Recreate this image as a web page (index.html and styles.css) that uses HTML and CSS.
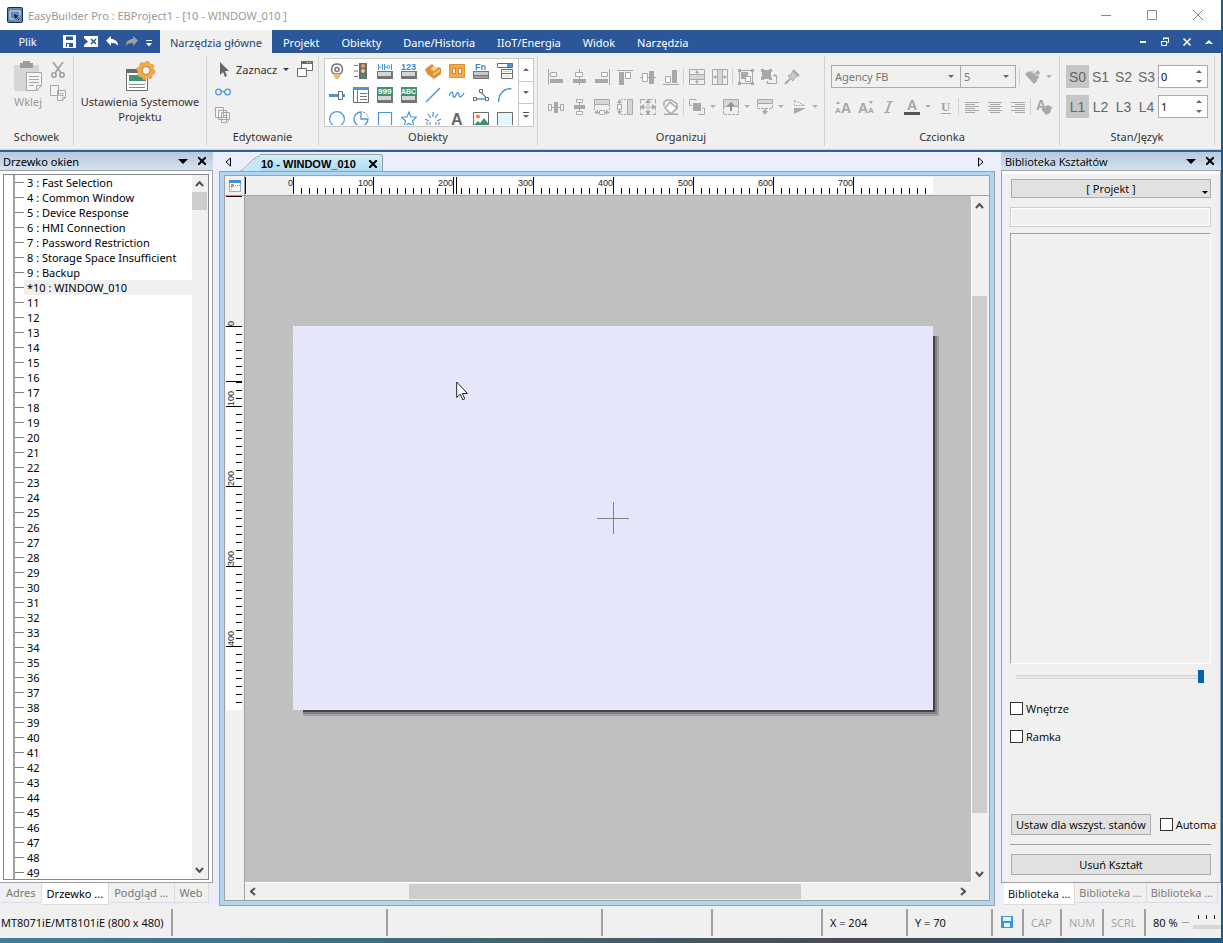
FILE: index.html
```html
<!DOCTYPE html>
<html lang="pl">
<head>
    <meta charset="UTF-8">
    <meta name="viewport" content="width=device-width, initial-scale=1.0">
    <title>EasyBuilder Pro : EBProject1</title>
    <link rel="stylesheet" href="styles.css">
</head>
<body>
<div class="window">

    <header class="titlebar">
        <svg class="app-icon" width="16" height="16" viewBox="0 0 16 16"><rect width="16" height="16" rx="2" fill="#1d2c44"/><rect x="1" y="1" width="14" height="14" rx="1" fill="#5d86b4"/><path d="M3 12V4h10v4M3 12h4" fill="none" stroke="#dce8f4" stroke-width="1"/><path d="M6 6l7 3-3 1 3 3-1 1-3-3-1 3z" fill="#16243a" stroke="#c4d6ea" stroke-width=".5"/></svg>
        <span class="app-title">EasyBuilder Pro : EBProject1 - [10 - WINDOW_010 ]</span>
        <button class="win-btn" aria-label="Minimalizuj"><svg width="10" height="10"><path d="M0 5.5h10"/></svg></button>
        <button class="win-btn" aria-label="Maksymalizuj"><svg width="10" height="10"><path d="M.5 .5h9v9h-9z"/></svg></button>
        <button class="win-btn" aria-label="Zamknij"><svg width="10" height="10"><path d="M0 0l10 10M10 0L0 10"/></svg></button>
    </header>

    <nav class="tabs">
        <button class="file-tab">Plik</button>
        <div class="quick">
            <button aria-label="Zapisz"><svg width="13" height="13" viewBox="0 0 13 13"><path d="M0 0h13v13H0z" fill="#fff"/><path d="M3 1.500h7v3.500H3zM3 8h7v4H3z" fill="#2b579a"/><path d="M4 9h2v3H4z" fill="#fff"/></svg></button>
            <button aria-label="Kompiluj"><svg width="14" height="13" viewBox="0 0 14 13"><path d="M0 1h14v11H0z" fill="#fff"/><path d="M0 3l4 3.500L0 10z" fill="#2b579a"/><path d="M7 4l5 5M12 4L7 9" stroke="#2b579a" stroke-width="1.500"/></svg></button>
            <button aria-label="Cofnij"><svg width="12" height="11" viewBox="0 0 12 11"><path d="M0 4.500L5 0v3c4 0 7 2 7 7-2-3-4-3-7-3v3z" fill="#fff"/></svg></button>
            <button aria-label="Ponów"><svg width="12" height="11" viewBox="0 0 12 11"><path d="M12 4.500L7 0v3C3 3 0 5 0 10c2-3 4-3 7-3v3z" fill="#a0a0a0"/></svg></button>
            <button class="more" aria-label="Więcej"><svg width="6" height="7" viewBox="0 0 6 7"><path d="M0 0h6v1H0zM0 3h6L3 6.500z" fill="#fff"/></svg></button>
        </div>
        <button class="tab active">Narzędzia główne</button>
        <button class="tab">Projekt</button>
        <button class="tab">Obiekty</button>
        <button class="tab">Dane/Historia</button>
        <button class="tab">IIoT/Energia</button>
        <button class="tab">Widok</button>
        <button class="tab">Narzędzia</button>
        <div class="mdi">
            <button aria-label="Minimalizuj okno"><svg width="10" height="10"><path d="M2 5h6" stroke="#fff" stroke-width="2"/></svg></button>
            <button aria-label="Przywróć okno"><svg width="10" height="10"><path d="M3.500 3V1.500h5v4H7M1.500 4.500h5v4h-5zM1 4.500h6M3 1h6" fill="none" stroke="#fff"/></svg></button>
            <button aria-label="Zamknij okno"><svg width="10" height="10"><path d="M1.500 1.500l7 7M8.500 1.500l-7 7" stroke="#fff" stroke-width="1.600"/></svg></button>
            <button aria-label="Zwiń wstążkę"><svg width="10" height="10"><path d="M1 7l4-4 4 4H6.500L5 6 3.500 7z" fill="#fff"/></svg></button>
        </div>
    </nav>

    <section class="ribbon">
        <div class="group g-clipboard">
            <div class="group-body">
                <button class="big muted">
                    <svg width="30" height="31" viewBox="0 0 30 31"><path d="M1 4h25v26H1z" fill="#d6d6d6"/><path d="M7 2h3V0h7v2h3v5H7z" fill="#9c9c9c"/><path d="M13.500 11.500h15v13l-5 5h-10z" fill="#f4f4f4" stroke="#a6a6a6"/><path d="M28 24.500h-4.500V29M16 15.500h10M16 18.500h10M16 21.500h10M16 24.500h5" fill="none" stroke="#a6a6a6"/></svg>
                    Wklej
                </button>
                <div class="stack">
                    <button aria-label="Wytnij"><svg width="14" height="16" viewBox="0 0 14 16" fill="none" stroke="#9f9f9f" stroke-width="1.600"><path d="M2 0l8 11M12 0L4 11"/><circle cx="3" cy="13" r="2.200"/><circle cx="11" cy="13" r="2.200"/></svg></button>
                    <button aria-label="Kopiuj"><svg width="16" height="16" viewBox="0 0 16 16" fill="#f4f4f4" stroke="#a6a6a6"><path d="M.5 .5h8v10h-8zM7.500 5.500h8v7l-3 3h-5z"/><path d="M9.500 8.500h4M9.500 10.500h4M15 12.500h-2.500V15"/></svg></button>
                </div>
            </div>
            <div class="group-name">Schowek</div>
        </div>

        <div class="group g-system">
            <div class="group-body">
                <button class="big">
                    <svg width="32" height="31" viewBox="0 0 32 31"><path d="M2 8h16v4H2z" fill="#6b6b6b"/><path d="M2.500 11.500h21v18h-21z" fill="#fff" stroke="#6b6b6b"/><path d="M5 14h17v6H5z" fill="#41936f"/><path d="M5 23.500h16M5 26.500h16" stroke="#8a8a8a"/><circle cx="22" cy="9.500" r="6" fill="none" stroke="#f5ab4a" stroke-width="5"/><circle cx="22" cy="9.500" r="8.500" fill="none" stroke="#eda244" stroke-width="2" stroke-dasharray="3.300 3.300"/><circle cx="22" cy="9.500" r="4" fill="#f4f4f4" stroke="#b98034"/></svg>
                    Ustawienia Systemowe<br>Projektu
                </button>
            </div>
            <div class="group-name"></div>
        </div>

        <div class="group g-edit">
            <div class="group-body edit-body">
                <div class="edit-row">
                    <button class="select-btn"><svg width="11" height="15" viewBox="0 0 11 15"><path d="M1 0l9 9H6l2 5-2 1-2-5-3 3z" fill="#666"/></svg>Zaznacz<i class="caret dark"></i></button>
                    <button aria-label="Okna"><svg width="16" height="16" viewBox="0 0 16 16" fill="#fff" stroke="#6b6b6b"><path d="M4.500 .5h11v9h-11z"/><path d="M4 1.500h12" stroke-width="3"/><path d="M10 1.500h1M12.500 1.500h1" stroke="#fff"/><path d="M.5 7.500h9v8h-9z"/></svg></button>
                </div>
                <button aria-label="Znajdź"><svg width="16" height="8" viewBox="0 0 16 8" fill="none" stroke="#4a96dd" stroke-width="1.300"><circle cx="3.500" cy="4" r="2.800"/><circle cx="12.500" cy="4" r="2.800"/><path d="M6.500 3.500h3"/></svg></button>
                <button aria-label="Powiel"><svg width="16" height="16" viewBox="0 0 16 16" fill="#f4f4f4" stroke="#a6a6a6"><path d="M.5 .5h8v10h-8zM3.500 3.500h8v9h-8zM6.500 5.500h8v7l-3 3h-5z"/><path d="M8.500 8.500h4M8.500 10.500h4M14 12.500h-2.500V15"/></svg></button>
            </div>
            <div class="group-name">Edytowanie</div>
        </div>

        <div class="group g-objects">
            <div class="gallery">
                <div class="gallery-items">
                    <button aria-label="Lampka"><svg width="16" height="16" viewBox="0 0 16 16"><path d="M5 11C1 8 2 1 8 1s7 7 3 10z" fill="none" stroke="#777" stroke-width="1.500"/><circle cx="8" cy="6.500" r="2" fill="none" stroke="#777" stroke-width="1.500"/><path d="M5 11h6v3l-2 2H7l-2-2z" fill="#eebb72"/></svg></button>
                    <button aria-label="Lampka stanu"><svg width="16" height="16" viewBox="0 0 16 16"><path d="M1 2.500h4M1 8h4M1 13.500h4" stroke="#777"/><path d="M6 0h8v16H6z" fill="#6b6b6b"/><circle cx="10" cy="3" r="2" fill="#f2a33c"/><circle cx="10" cy="8" r="2" fill="#f2c98c"/><path d="M8 11h4v4H8z" fill="#41936f"/></svg></button>
                    <button aria-label="Przełącznik bitowy"><svg width="16" height="16" viewBox="0 0 16 16"><path d="M1.500 1v6M1.500 4h3M5.500 1v6M7.500 1v6M7 4h3M14.500 1v6" stroke="#4a96dd"/><circle cx="11.500" cy="4" r="1.500" fill="none" stroke="#4a96dd"/><path d="M0 8h16v8H0z" fill="#757575"/><path d="M1 9h13v4H1z" fill="#d6d6d6"/></svg></button>
                    <button aria-label="Przełącznik słowny"><svg width="16" height="16" viewBox="0 0 16 16"><text x="0" y="7" class="glyph blue">123</text><path d="M0 8h16v8H0z" fill="#757575"/><path d="M1 9h13v4H1z" fill="#d6d6d6"/></svg></button>
                    <button aria-label="Klawisz funkcyjny"><svg width="16" height="16" viewBox="0 0 16 16"><path d="M0 6l7-5 2 2-3 3 3 2 4-4 3 1v6l-7 5-7-5z" fill="#dd9235"/><path d="M6 6l3-3 4 2-4 3zM8 11l7-5v2l-7 5z" fill="#f8cd91"/></svg></button>
                    <button aria-label="Przełącznik"><svg width="16" height="16" viewBox="0 0 16 16"><path d="M.5 1.500h15v13H.5z" fill="#f5ab4a" stroke="#dd9235"/><path d="M3.500 5.500h3v5h-3zM9.500 5.500h3v5h-3z" fill="#fff" stroke="#c6812e"/></svg></button>
                    <button aria-label="Funkcja"><svg width="16" height="16" viewBox="0 0 16 16"><text x="2" y="7" class="glyph blue">Fn</text><path d="M0 8h16v8H0z" fill="#757575"/><path d="M1 9h14v3H1z" fill="#c9c9c9"/><path d="M1 13h14v2H1z" fill="#a0a0a0"/></svg></button>
                    <button aria-label="Lista opcji"><svg width="16" height="16" viewBox="0 0 16 16" fill="#fff" stroke="#6b6b6b"><path d="M.5 .5h15v4H.5zM4.500 6.500h11v4h-11zM4.500 10.500h11v5h-11z"/><path d="M10 1h5v3h-5z" fill="#4a96dd" stroke="none"/><path d="M6 8.500h8M6 13h8" stroke="#d0d0d0"/></svg></button>

                    <button aria-label="Suwak"><svg width="16" height="16" viewBox="0 0 16 16"><path d="M0 8.500h16" stroke="#4a96dd" stroke-width="3"/><path d="M9.500 4.500h4v8h-4z" fill="#fff" stroke="#6b6b6b"/></svg></button>
                    <button aria-label="Lista"><svg width="16" height="16" viewBox="0 0 16 16"><path d="M.5 .5h15v15H.5z" fill="#fff" stroke="#6b6b6b"/><path d="M0 0h16v3H0z" fill="#4a96dd"/><path d="M4.500 3v12M7 6.500h7M7 9.500h7M7 12.500h7" stroke="#777"/></svg></button>
                    <button aria-label="Numeryczny"><svg width="16" height="16" viewBox="0 0 16 16"><path d="M0 0h16v8H0z" fill="#41936f"/><text x="1" y="7" class="glyph white">999</text><path d="M0 8h16v8H0z" fill="#757575"/><path d="M1 9h13v4H1z" fill="#d6d6d6"/></svg></button>
                    <button aria-label="ASCII"><svg width="16" height="16" viewBox="0 0 16 16"><path d="M0 0h16v8H0z" fill="#41936f"/><text x="0" y="7" class="glyph white small">ABC</text><path d="M0 8h16v8H0z" fill="#757575"/><path d="M1 9h13v4H1z" fill="#d6d6d6"/></svg></button>
                    <button aria-label="Linia"><svg width="16" height="16" viewBox="0 0 16 16"><path d="M1 15L15 1" stroke="#4a96dd" stroke-width="1.400"/></svg></button>
                    <button aria-label="Krzywa"><svg width="16" height="16" viewBox="0 0 16 16"><path d="M0 9c2-6 4-4 4-1s2 3 3 0 3-3 3 0 3 2 5-2" fill="none" stroke="#4a96dd" stroke-width="1.400"/></svg></button>
                    <button aria-label="Łamana"><svg width="16" height="16" viewBox="0 0 16 16"><path d="M3 12h10M8 5l6 7" stroke="#4a96dd" stroke-width="1.400"/><path d="M.5 10.500h3v3h-3zM6.500 2.500h3v3h-3zM12.500 10.500h3v3h-3z" fill="#fff" stroke="#6b6b6b"/></svg></button>
                    <button aria-label="Łuk"><svg width="16" height="16" viewBox="0 0 16 16"><path d="M1.500 15C1.500 7 7 1.500 14.500 1.500" fill="none" stroke="#4a96dd" stroke-width="1.400"/></svg></button>

                    <button aria-label="Okrąg"><svg width="16" height="16" viewBox="0 0 16 16"><circle cx="8" cy="8" r="7.400" fill="none" stroke="#4a96dd" stroke-width="1.200"/></svg></button>
                    <button aria-label="Wycinek"><svg width="16" height="16" viewBox="0 0 16 16" fill="none"><path d="M8 1a7 7 0 1 0 7 7H8z" stroke="#4a96dd" stroke-width="1.300"/><path d="M10 1a7 7 0 0 1 5 5" stroke="#777" stroke-dasharray="2 1"/></svg></button>
                    <button aria-label="Prostokąt"><svg width="16" height="16" viewBox="0 0 16 16"><path d="M1.500 1.500h13v15h-13z" fill="none" stroke="#4a96dd" stroke-width="1.200"/></svg></button>
                    <button aria-label="Wielokąt"><svg width="16" height="16" viewBox="0 0 16 16"><path d="M8 1l2 5h5.500l-4 4 1.500 5.500-5-3-5 3L4.500 10l-4-4H6z" fill="none" stroke="#4a96dd" stroke-width="1.200"/></svg></button>
                    <button aria-label="Skala"><svg width="16" height="16" viewBox="0 0 16 16"><path d="M8 1v5M3 3l3 4M13 3l-3 4M0 8l4 2M16 8l-4 2" stroke="#4a96dd" stroke-width="1.200"/><path d="M2 11v3M5 11v3M11 11v3M14 11v3" stroke="#777"/></svg></button>
                    <button aria-label="Tekst"><svg width="16" height="16" viewBox="0 0 16 16"><text x="2" y="14" class="glyph letter">A</text></svg></button>
                    <button aria-label="Obraz"><svg width="16" height="16" viewBox="0 0 16 16"><path d="M.5 1.500h15v13H.5z" fill="#fff" stroke="#6b6b6b"/><circle cx="5" cy="5.500" r="2" fill="#e0902f"/><path d="M1 14l4-4 2 2 4-5 4 5v2z" fill="#41936f"/></svg></button>
                    <button aria-label="Ramka"><svg width="16" height="16" viewBox="0 0 16 16"><path d="M.5 1.500h15v14H.5z" fill="#e4f6fd" stroke="#6b6b6b"/></svg></button>
                </div>
                <div class="gallery-scroll">
                    <button aria-label="W górę"><i class="caret up"></i></button>
                    <button aria-label="W dół"><i class="caret"></i></button>
                    <button aria-label="Rozwiń" class="expand"><i class="caret"></i></button>
                </div>
            </div>
            <div class="group-name">Obiekty</div>
        </div>

        <div class="group g-arrange">
            <div class="tool-rows">
                <div class="tool-row">
                    <button aria-label="Do lewej"><svg class="off" width="16" height="16"><path d="M.5 0v16"/><path d="M2.500 3.500h6v4h-6z" class="w"/><path d="M2 10h13v4H2z" class="f"/></svg></button>
                    <button aria-label="Do środka"><svg class="off" width="16" height="16"><path d="M8.500 0v16"/><path d="M4.500 3.500h7v4h-7z" class="w"/><path d="M2 10h13v4H2z" class="f"/></svg></button>
                    <button aria-label="Do prawej"><svg class="off" width="16" height="16"><path d="M15.500 0v16"/><path d="M7.500 3.500h6v4h-6z" class="w"/><path d="M1 10h13v4H1z" class="f"/></svg></button>
                    <button aria-label="Do góry"><svg class="off" width="16" height="16"><path d="M0 1.500h16"/><path d="M8.500 3.500h5v6h-5z" class="w"/><path d="M2 3h5v13H2z" class="f"/></svg></button>
                    <button aria-label="W pionie"><svg class="off" width="16" height="16"><path d="M0 8.500h16"/><path d="M2.500 4.500h5v8h-5z" class="w"/><path d="M9 2h5v13H9z" class="f"/></svg></button>
                    <button aria-label="Do dołu"><svg class="off" width="16" height="16"><path d="M0 15.500h16"/><path d="M2.500 7.500h5v6h-5z" class="w"/><path d="M9 1h5v13H9z" class="f"/></svg></button>
                    <i class="bar"></i>
                    <button aria-label="Środek pion"><svg class="off" width="16" height="16"><path d="M.5 .5h15v15H.5zM0 5.500h16M0 10.500h16M8 2v3M8 11v3"/><path d="M6 4l2-3 2 3zM6 12l2 3 2-3z" class="f"/><path d="M1 6h14v4H1z" class="l"/></svg></button>
                    <button aria-label="Środek poziom"><svg class="off" width="16" height="16"><path d="M.5 .5h15v15H.5zM5.500 0v16M10.500 0v16M2 8h3M11 8h3"/><path d="M4 6L1 8l3 2zM12 6l3 2-3 2z" class="f"/><path d="M6 1h4v14H6z" class="l"/></svg></button>
                    <i class="bar"></i>
                    <button aria-label="Grupuj"><svg class="off" width="16" height="16"><path d="M1.500 1.500h13v13h-13z"/><path d="M3 3h7v7H3zM0 0h3v3H0zM13 0h3v3h-3zM0 13h3v3H0zM13 13h3v3h-3z" class="f"/><path d="M7.500 7.500h5v5h-5z" class="w"/></svg></button>
                    <button aria-label="Rozgrupuj"><svg class="off" width="16" height="16"><path d="M1 1h9v9H1zM0 0h3v3H0zM8 0h3v3H8zM0 8h3v3H0zM8 8h3v3H8z" class="f"/><path d="M12 6.500h3.500v8h-9V12M5 14h3M14 5v3"/></svg></button>
                    <button aria-label="Przypnij"><svg class="off" width="16" height="16"><path d="M9 2l5 5-2 1-2 2-1 2-5-5 2-1 2-2z" fill="#c8c8c8"/><path d="M9 1l6 6M6 10l-5 5" stroke-width="2"/></svg></button>
                </div>
                <div class="tool-row">
                    <button aria-label="Odstęp poziomy"><svg class="off" width="16" height="16"><path d="M0 8.500h16"/><path d="M.5 5.500h3v6h-3zM12.500 5.500h3v6h-3z" class="w"/><path d="M6 3h4v11H6z" class="f"/></svg></button>
                    <button aria-label="Odstęp pionowy"><svg class="off" width="16" height="16"><path d="M8.500 0v16"/><path d="M5.500 .5h6v3h-6zM5.500 12.500h6v3h-6z" class="w"/><path d="M3 6h11v4H3z" class="f"/></svg></button>
                    <button aria-label="Ta sama szerokość"><svg class="off" width="16" height="16"><path d="M.5 .5h15v5H.5z" fill="#d6d6d6"/><path d="M.5 6v6M15.500 6v6" stroke-dasharray="2 1"/><path d="M1 13.500h14"/><path d="M5.500 11.500h5v4h-5z" class="w"/><path d="M0 13.500l4-3v5zM16 13.500l-4-3v5z" class="f"/></svg></button>
                    <button aria-label="Ta sama wysokość"><svg class="off" width="16" height="16"><path d="M10.500 .5h5v15h-5z" fill="#d6d6d6"/><path d="M4 .5h6M4 15.500h6" stroke-dasharray="2 1"/><path d="M2.500 1v14"/><path d="M.5 5.500h4v5h-4z" class="w"/><path d="M2.500 0L0 4h5zM2.500 16L0 12h5z" class="f"/></svg></button>
                    <button aria-label="Ten sam rozmiar"><svg class="off" width="16" height="16"><path d="M.5 .5h15v15H.5z" stroke-dasharray="5 2"/><path d="M8 1v14M1 8h14"/><path d="M8 0L5 4h6zM8 16l-3-4h6zM0 8l4-3v6zM16 8l-4-3v6z" class="f"/><path d="M6 6h4v4H6z" class="l"/></svg></button>
                    <button aria-label="Wypełnienie"><svg class="off" width="16" height="16"><path d="M7 3l7 6-6 6-6-6zM1 7V3l3-2h4l6 4v5" stroke-width="1.500" class="w"/><path d="M1 15.500h14" stroke-width="2"/></svg></button>
                    <i class="bar"></i>
                    <button class="wide" aria-label="Kolejność"><svg class="off" width="16" height="16"><path d="M7 1.500V.5H.5v6H3M10 14.500v1h5.500V9H13"/><path d="M4 4h8v8H4z" class="f"/></svg><i class="caret pale"></i></button>
                    <button class="wide" aria-label="Warstwa w górę"><svg class="off" width="16" height="16"><path d="M.5 .5h15v7H.5z" fill="#d6d6d6"/><path d="M.5 8v7.500h15V8" stroke-dasharray="3 1"/><path d="M8 4v8" stroke-width="2" stroke="#909090"/><path d="M4 7l4-4 4 4z" fill="#909090" stroke="none"/></svg><i class="caret pale"></i></button>
                    <button class="wide" aria-label="Warstwa w dół"><svg class="off" width="16" height="16"><path d="M.5 .5h15v4H.5z" fill="#d6d6d6"/><path d="M.5 5v4.500h15V5" stroke-dasharray="3 1"/><path d="M8 10v3" stroke-width="2"/><path d="M5 12h6l-3 4z" class="f"/></svg><i class="caret pale"></i></button>
                    <button class="wide" aria-label="Obróć"><svg class="off" width="16" height="16"><path d="M3.500 1.500l10 5h-10z" stroke-dasharray="2 1" class="w"/><path d="M3 9h12L3 15z" class="f"/></svg><i class="caret pale"></i></button>
                </div>
            </div>
            <div class="group-name">Organizuj</div>
        </div>

        <div class="group g-font">
            <div class="tool-rows">
                <div class="tool-row">
                    <span class="combo font-name"><select aria-label="Czcionka"><option>Agency FB</option></select><i class="caret"></i></span>
                    <span class="combo font-size"><select aria-label="Rozmiar"><option>5</option></select><i class="caret"></i></span>
                    <i class="bar"></i>
                    <button class="wide" aria-label="Malarz"><svg class="off" width="16" height="16" viewBox="0 0 16 16"><path d="M0 5l4-3 9 6-1 4-3 3z" class="f"/><path d="M4 3l3-2 8 5-2 3z" class="l"/><path d="M10 4l3-3 2 3-2 2z" class="f"/><path d="M5 3l9 6" stroke-width="1.500"/></svg><i class="caret pale"></i></button>
                </div>
                <div class="tool-row">
                    <button aria-label="Powiększ"><svg class="off" width="16" height="16"><text x="6" y="14" class="glyph letter off-letter">A</text><text x="0" y="14" class="glyph tiny">A</text><path d="M1 5l2-3 2 3z" class="f"/></svg></button>
                    <button aria-label="Zmniejsz"><svg class="off" width="16" height="16"><text x="0" y="14" class="glyph letter off-letter">A</text><text x="10" y="14" class="glyph tiny">A</text><path d="M11 2l2 3 2-3z" class="f"/></svg></button>
                    <button aria-label="Kursywa"><svg class="off" width="16" height="16"><path d="M6 2.500h6M3 13.500h6" /><path d="M9.500 2.500l-4 11" stroke-width="2"/></svg></button>
                    <button class="wide" aria-label="Kolor czcionki"><svg class="off" width="16" height="16"><text x="3" y="11" class="glyph letter off-letter">A</text><path d="M0 13h16v3H0z" fill="#555" stroke="none"/></svg><i class="caret pale"></i></button>
                    <button aria-label="Podkreślenie"><svg class="off" width="16" height="16"><text x="3" y="12" class="glyph under">U</text><path d="M3 14.500h10"/></svg></button>
                    <i class="bar"></i>
                    <button aria-label="Wyrównaj do lewej"><svg class="off" width="16" height="16"><path d="M1 3.500h14M1 5.500h10M1 7.500h14M1 9.500h10M1 11.500h14M1 13.500h10"/></svg></button>
                    <button aria-label="Wyśrodkuj"><svg class="off" width="16" height="16"><path d="M1 3.500h14M3 5.500h10M1 7.500h14M3 9.500h10M1 11.500h14M3 13.500h10"/></svg></button>
                    <button aria-label="Wyrównaj do prawej"><svg class="off" width="16" height="16"><path d="M1 3.500h14M5 5.500h10M1 7.500h14M5 9.500h10M1 11.500h14M5 13.500h10"/></svg></button>
                    <i class="bar"></i>
                    <button aria-label="Format tekstu"><svg class="off" width="16" height="16"><text x="0" y="11" class="glyph letter off-letter">A</text><path d="M5 10l7-4 4 2-2 6-4 2z" class="f"/></svg></button>
                </div>
            </div>
            <div class="group-name">Czcionka</div>
        </div>

        <div class="group g-state">
            <div class="tool-rows">
                <div class="tool-row">
                    <button class="state on">S0</button><button class="state">S1</button><button class="state">S2</button><button class="state">S3</button>
                    <span class="spin"><input type="text" value="0" aria-label="Stan"><span><i class="caret up"></i><i class="caret"></i></span></span>
                </div>
                <div class="tool-row">
                    <button class="state on">L1</button><button class="state">L2</button><button class="state">L3</button><button class="state">L4</button>
                    <span class="spin"><input type="text" value="1" aria-label="Język"><span><i class="caret up"></i><i class="caret"></i></span></span>
                </div>
            </div>
            <div class="group-name">Stan/Język</div>
        </div>
    </section>

    <main class="workspace">
        <aside class="dock left">
            <div class="dock-head"><span>Drzewko okien</span><button aria-label="Menu"><i class="caret big-caret"></i></button><button aria-label="Zamknij"><svg width="8" height="8"><path d="M0 0l8 8M8 0L0 8"/></svg></button></div>
            <div class="dock-body">
                <div class="tree-box">
                    <ul class="tree" id="tree"></ul>
                    <div class="vscroll">
                        <svg width="9" height="6"><path d="M1 5l3.500-4L8 5"/></svg>
                        <div class="thumb tree-thumb"></div>
                        <svg class="end" width="9" height="6"><path d="M1 1l3.500 4L8 1"/></svg>
                    </div>
                </div>
            </div>
            <div class="dock-tabs">
                <button>Adres</button><button class="active">Drzewko ...</button><button>Podgląd ...</button><button>Web</button>
            </div>
        </aside>

        <section class="editor">
            <div class="doc-tabs">
                <button class="nav" aria-label="Poprzednia"><svg width="6" height="10"><path d="M5.500 1v8L1 5z"/></svg></button>
                <div class="doc-tab">
                    <svg width="27" height="18"><path d="M0 18C10 17 14 1 27 .5V18z" fill="#c4e8f6"/><path d="M0 17.500C8 16 12 1 27 .5" fill="none" stroke="#a0a0a0"/></svg>
                    <div class="doc-label"><span>10 - WINDOW_010</span><button aria-label="Zamknij kartę"><svg width="8" height="8"><path d="M0 0l8 8M8 0L0 8"/></svg></button></div>
                </div>
                <button class="nav next" aria-label="Następna"><svg width="6" height="10"><path d="M.5 1v8L5 5z"/></svg></button>
            </div>
            <div class="frame">
                <div class="sheet">
                    <div class="corner"><svg width="12" height="12"><path d="M.5 .5h11v11H.5z" fill="#fff" stroke="#a0a8b0"/><path d="M0 0h12v3H0z" fill="#3f8ed8"/><path d="M2 4h3v3H2z" fill="#f08a24"/><path d="M2.500 7v4M6 5.500h5" stroke="#99a" stroke-dasharray="1 1"/></svg></div>
                    <div class="ruler-x"><div class="before"><span>0</span></div><div class="scale" id="scaleX"></div></div>
                    <div class="ruler-y"><div class="before"><span>0</span></div><div class="scale" id="scaleY"></div></div>
                    <div class="canvas">
                        <div class="page">
                            <svg class="cross" width="32" height="32"><path d="M0 16.500h32M16.500 0v32" stroke="#808080"/></svg>
                            <svg class="pointer" width="12" height="20" viewBox="0 0 12 20"><path d="M.7 1v15.500l3.600-3.300 2.500 5.600 2-1-2.400-5.300h5z" fill="#fff" stroke="#222"/></svg>
                        </div>
                    </div>
                    <div class="vscroll">
                        <svg width="9" height="6"><path d="M1 5l3.500-4L8 5"/></svg>
                        <div class="thumb canvas-thumb"></div>
                        <svg class="end" width="9" height="6"><path d="M1 1l3.500 4L8 1"/></svg>
                    </div>
                    <div class="hscroll">
                        <svg width="6" height="9"><path d="M5 1L1 4.500 5 8"/></svg>
                        <div class="thumb"></div>
                        <svg class="end" width="6" height="9"><path d="M1 1l4 3.500L1 8"/></svg>
                    </div>
                </div>
            </div>
        </section>

        <aside class="dock right">
            <div class="dock-head"><span>Biblioteka Kształtów</span><button aria-label="Menu"><i class="caret big-caret"></i></button><button aria-label="Zamknij"><svg width="8" height="8"><path d="M0 0l8 8M8 0L0 8"/></svg></button></div>
            <div class="dock-body">
                <div class="shapes">
                    <button class="btn project">[ Projekt ]<i class="caret"></i></button>
                    <input class="search" type="text" aria-label="Szukaj">
                    <div class="preview"></div>
                    <input class="slider" type="range" min="0" max="100" value="100" aria-label="Powiększenie">
                    <label class="check"><input type="checkbox">Wnętrze</label>
                    <label class="check"><input type="checkbox">Ramka</label>
                    <div class="apply">
                        <button class="btn">Ustaw dla wszyst. stanów</button>
                        <label class="check"><input type="checkbox">Automatycznie</label>
                    </div>
                    <hr>
                    <button class="btn">Usuń Kształt</button>
                </div>
            </div>
            <div class="dock-tabs">
                <button class="active">Biblioteka ...</button><button>Biblioteka ...</button><button>Biblioteka ...</button>
            </div>
        </aside>
    </main>

    <footer class="status">
        <span class="device">MT8071iE/MT8101iE (800 x 480)</span>
        <span class="cell w215"></span>
        <span class="cell w215"></span>
        <span class="cell w110"></span>
        <span class="cell w110"></span>
        <span class="cell w85">X = 204</span>
        <span class="cell w85">Y = 70</span>
        <span class="cell w31"><svg width="12" height="12" viewBox="0 0 12 12"><path d="M0 0h12v12H0z" fill="#3d95e0"/><path d="M2 1h8v4H2zM3 7h6v4H3z" fill="#e4f2fc"/></svg></span>
        <span class="cell key w38">CAP</span>
        <span class="cell key w42">NUM</span>
        <span class="cell key w42">SCRL</span>
        <span class="cell zoom">80 %<i class="minus"></i><span class="zoom-track"></span></span>
    </footer>
</div>

<script>
    const names = ["3 : Fast Selection", "4 : Common Window", "5 : Device Response", "6 : HMI Connection",
        "7 : Password Restriction", "8 : Storage Space Insufficient", "9 : Backup", "*10 : WINDOW_010"];
    for (let i = 11; i <= 49; i++) names.push(String(i));

    const tree = document.getElementById("tree");
    names.forEach(name => {
        const li = document.createElement("li");
        const label = document.createElement("span");
        label.textContent = name;
        if (name.startsWith("*")) li.className = "current";
        li.appendChild(label);
        tree.appendChild(li);
    });

    function buildScale(id, last) {
        const scale = document.getElementById(id);
        for (let v = 100; v <= last; v += 100) {
            const part = document.createElement("div");
            part.innerHTML = `<span>${v}</span>`;
            scale.appendChild(part);
        }
        const mark = document.createElement("i");
        mark.className = "mark";
        scale.appendChild(mark);
    }
    buildScale("scaleX", 700);
    buildScale("scaleY", 400);
</script>
</body>
</html>
```
FILE: styles.css
```css
* {
    box-sizing: border-box;
}
body {
    margin: 0;
    height: 100vh;
    padding: 0 2px 5px 0;
    background: linear-gradient(90deg, #3f7f9c, #3d6f80 30%, #4a4a50 70%, #1f5a84);
    font: 11px/15px "Noto Sans", "Open Sans", sans-serif;
    color: #000;
    overflow: hidden;
}
button {
    border: 0;
    padding: 0;
    background: none;
    font: inherit;
    color: inherit;
    display: flex;
    align-items: center;
    justify-content: center;
}
svg {
    display: block;
    flex: none;
}
.window {
    height: 100%;
    display: flex;
    flex-direction: column;
    background: #f0f0f0;
}

/* title bar */
.titlebar {
    height: 30px;
    display: flex;
    align-items: center;
    background: #fff;
    color: #999;
    padding-left: 7px;
}
.app-title {
    flex: 1;
    margin-left: 5px;
}
.win-btn {
    width: 46px;
    height: 30px;
}
.win-btn svg {
    fill: none;
    stroke: #888;
}

/* ribbon tabs */
.tabs {
    height: 23px;
    display: flex;
    background: #2b579a;
    color: #fff;
}
.file-tab {
    width: 55px;
}
.quick {
    width: 105px;
    display: flex;
    align-items: center;
    gap: 8px;
    padding-left: 8px;
}
.quick .more {
    padding-top: 4px;
}
.tab {
    padding: 2px 11px 0;
}
.tab.active {
    background: #f0f0f0;
    color: #1e3f73;
    padding: 2px 10px 0;
}
.mdi {
    margin-left: auto;
    display: flex;
    gap: 12px;
    padding-right: 7px;
}

/* ribbon */
.ribbon {
    height: 97px;
    display: flex;
    padding: 3px 0;
    border-bottom: 1px solid #d0d0d0;
    color: #333;
}
.group {
    display: flex;
    flex-direction: column;
    border-right: 1px solid #d4d4d4;
}
.group-body {
    height: 73px;
    display: flex;
    justify-content: center;
}
.group-name {
    text-align: center;
}
.g-clipboard { width: 74px; }
.g-system { width: 133px; }
.g-edit { width: 112px; }
.g-objects { width: 219px; }
.g-arrange { width: 287px; }
.g-font { width: 235px; }
.g-state { width: 155px; }
.g-clipboard .group-body {
    padding-left: 6px;
}
.big {
    flex-direction: column;
    justify-content: flex-start;
    padding-top: 5px;
}
.big svg {
    margin-bottom: 2px;
}
.muted {
    color: #999;
}
.stack {
    display: flex;
    flex-direction: column;
    gap: 7px;
    padding: 6px 0 0 7px;
}
.edit-body {
    flex-direction: column;
    justify-content: flex-start;
    align-items: flex-start;
    gap: 11px;
    padding: 5px 0 0 8px;
}
.edit-row {
    display: flex;
    gap: 8px;
}
.select-btn {
    gap: 6px;
    padding-left: 4px;
}
.caret {
    flex: none;
    width: 0;
    height: 0;
    border: 3px solid transparent;
    border-top-color: #666;
    border-bottom: 0;
}
.caret.up {
    border: 3px solid transparent;
    border-bottom-color: #666;
    border-top: 0;
}
.caret.dark {
    border-top-color: #1e3f73;
}
.caret.pale {
    border-top-color: #b0b0b0;
}
.caret.big-caret {
    border-width: 5px 5px 0;
    border-top-color: #000;
}
.gallery {
    height: 69px;
    margin: 2px 3px 2px 5px;
    display: flex;
    border: 1px solid #c8c8c8;
    background: #fff;
}
.gallery-items {
    flex: 1;
    height: 66px;
    display: grid;
    grid-template-columns: repeat(8, 24px);
    grid-auto-rows: 24px;
    overflow: hidden;
}
.gallery-scroll {
    width: 15px;
    border-left: 1px solid #c8c8c8;
    display: flex;
    flex-direction: column;
}
.gallery-scroll button {
    flex: 1;
}
.gallery-scroll button + button {
    border-top: 1px solid #c8c8c8;
}
.expand {
    flex-direction: column;
    gap: 2px;
}
.expand::before {
    content: "";
    width: 6px;
    border-top: 1px solid #555;
}
.glyph {
    font: bold 8px "Liberation Sans", sans-serif;
    stroke: none;
}
.glyph.blue { fill: #3c85cc; font-size: 9px; }
.glyph.white { fill: #fff; }
.glyph.small { font-size: 7px; }
.glyph.letter { fill: #666; font-size: 16px; }
.glyph.off-letter { fill: #a4a4a4; font-size: 14px; }
.glyph.tiny { fill: #a4a4a4; }
.glyph.under { fill: #a4a4a4; font: bold 13px "Liberation Serif", serif; }

.tool-rows {
    height: 73px;
    padding: 9px 0 0 6px;
    display: flex;
    flex-direction: column;
    gap: 7px;
}
.tool-row {
    height: 23px;
    display: flex;
    align-items: center;
}
.tool-row button {
    width: 23px;
    height: 23px;
}
.tool-row .wide {
    width: 34px;
    gap: 5px;
}
.bar {
    width: 1px;
    height: 17px;
    margin: 0 1px;
    background: #d0d0d0;
}
.off {
    fill: none;
    stroke: #a8a8a8;
}
.off .f { fill: #a8a8a8; stroke: none; }
.off .w { fill: #fafafa; }
.off .l { fill: #d6d6d6; stroke: none; }
.combo {
    height: 23px;
    display: flex;
    align-items: center;
    border: 1px solid #ababab;
    padding-right: 6px;
}
.combo + .combo {
    border-left: 0;
}
.font-name { width: 130px; }
.font-size { width: 55px; margin-right: 2px; }
.combo select {
    flex: 1;
    min-width: 0;
    appearance: none;
    border: 0;
    padding: 0 0 0 3px;
    background: none;
    font: inherit;
    color: #777;
}
.tool-row .state {
    font: 14px "Liberation Sans", sans-serif;
    color: #666;
}
.tool-row .state.on {
    background: #c6c6c6;
}
.spin {
    width: 50px;
    height: 23px;
    display: flex;
    align-items: center;
    border: 1px solid #ababab;
    background: #fff;
    padding-right: 5px;
}
.spin input {
    flex: 1;
    min-width: 0;
    border: 0;
    padding: 0 2px;
    background: none;
    font: inherit;
    color: #111;
}
.spin > span {
    display: flex;
    flex-direction: column;
    gap: 7px;
}

/* docked panels */
.workspace {
    flex: 1;
    min-height: 0;
    display: flex;
    border-top: 2px solid #2f609f;
    background: #ebeefb;
}
.dock {
    display: flex;
    flex-direction: column;
}
.dock.left { width: 213px; }
.dock.right {
    width: 220px;
    font-family: "Open Sans", sans-serif;
}
.dock-head {
    height: 19px;
    display: flex;
    align-items: center;
    gap: 10px;
    padding: 0 7px 0 3px;
    background: linear-gradient(#b8c9dd, #d4e2f0);
    border-bottom: 1px solid #a0a0a0;
}
.right .dock-head {
    padding-left: 4px;
}
.dock-head span {
    flex: 1;
    white-space: nowrap;
}
.dock-head svg,
.doc-label button svg {
    stroke: #000;
    stroke-width: 2;
}
.dock-body {
    flex: 1;
    min-height: 0;
    background: #fff;
    border-right: 1px solid #a0a0a0;
    border-bottom: 1px solid #a0a0a0;
}
.left .dock-body {
    padding: 3px 3px 2px;
}
.right .dock-body {
    padding: 3px 3px 0;
    border-left: 1px solid #a0a0a0;
    background: linear-gradient(#fff 3px, #ebeefb 3px);
}
.tree-box {
    height: 100%;
    display: flex;
    border: 1px solid #828790;
}
.tree {
    flex: 1;
    margin: 0 0 0 9px;
    padding: 0;
    list-style: none;
    overflow: hidden;
    border-left: 2px solid #a0a0a0;
}
.tree li {
    height: 15px;
    display: flex;
    align-items: center;
}
.tree li::before {
    content: "";
    width: 9px;
    border-top: 1px solid #808080;
}
.tree li span {
    flex: 1;
    padding-left: 3px;
    white-space: nowrap;
}
.tree .current span {
    background: #f0f0f0;
}
.vscroll,
.hscroll {
    background: #f0f0f0;
    display: flex;
    align-items: center;
}
.vscroll {
    width: 16px;
    flex-direction: column;
    padding: 6px 1px 6px 0;
}
.hscroll {
    padding: 0 5px 1px;
    border-top: 1px solid #fff;
}
.sheet .vscroll {
    width: 17px;
    padding: 7px 1px 5px 0;
    border-left: 1px solid #fff;
}
.vscroll svg,
.hscroll svg {
    fill: none;
    stroke: #505050;
    stroke-width: 2;
}
.vscroll .end { margin-top: auto; }
.hscroll .end { margin-left: auto; }
.thumb {
    background: #cdcdcd;
}
.tree-thumb {
    width: 15px;
    height: 18px;
    margin-top: 5px;
}
.dock-tabs {
    height: 23px;
    display: flex;
    align-items: flex-start;
    padding-left: 1px;
    color: #777;
}
.dock-tabs button {
    height: 20px;
    padding: 0 5px;
    background: #f0f0f0;
    border: 1px solid #dcdcdc;
    border-width: 0 1px 1px 0;
    white-space: nowrap;
}
.dock-tabs .active {
    height: 22px;
    background: #fff;
    color: #000;
}
.right .dock-tabs {
    padding-left: 3px;
}
.right .dock-tabs button {
    padding: 0 4px;
}

/* editor */
.editor {
    flex: 1;
    min-width: 0;
    margin: 0 6px;
    display: flex;
    flex-direction: column;
}
.doc-tabs {
    height: 19px;
    display: flex;
}
.nav {
    width: 20px;
    padding-right: 3px;
}
.nav svg {
    fill: none;
    stroke: #000;
}
.next {
    margin: 0 3px 0 auto;
}
.doc-tab {
    display: flex;
    padding-top: 2px;
}
.doc-label {
    display: flex;
    align-items: center;
    gap: 13px;
    height: 18px;
    padding: 0 5px 0 1px;
    margin-left: -6px;
    background: linear-gradient(#d0f0fa, #aed8f2);
    border-top: 1px solid #a0a0a0;
    border-right: 1px solid #a0a0a0;
    border-radius: 0 3px 0 0;
    font: bold 11px "Liberation Sans", sans-serif;
    white-space: nowrap;
}
.frame {
    flex: 1;
    min-height: 0;
    padding: 3px 4px 4px;
    background: #b0d7f1;
    border: 1px solid #a0a0a0;
}
.sheet {
    height: 100%;
    display: grid;
    grid-template-columns: 20px 1fr 18px;
    grid-template-rows: 20px 1fr 18px;
    border: 1px solid #a0a0a0;
    background: #f0f0f0;
}
.corner {
    display: flex;
    align-items: center;
    justify-content: center;
    border: 1px solid #a0a0a0;
    border-width: 0 1px 1px 0;
}
.ruler-x,
.ruler-y {
    display: flex;
    overflow: hidden;
    font: 9px/9px "Liberation Sans", sans-serif;
    color: #222;
}
.ruler-x {
    grid-column: 2 / 4;
    padding: 1px 0;
    border-bottom: 1px solid #a0a0a0;
}
.ruler-x .before {
    width: 49px;
    border-left: 1px solid #300;
    border-right: 1px solid #000;
    text-align: right;
}
.ruler-x .scale {
    position: relative;
    display: flex;
    width: 639px;
    background: repeating-linear-gradient(90deg, transparent 0 7px, #000 7px 8px) 0 100% / 100% 6px no-repeat #fff;
}
.ruler-x .scale div {
    width: 80px;
    border-right: 1px solid #000;
    text-align: right;
}
.ruler-x .before,
.ruler-x .scale div {
    padding-top: 2px;
}
.ruler-x .mark {
    position: absolute;
    left: 162px;
    top: 0;
    bottom: 0;
    width: 1px;
    background: #000;
}
.ruler-y {
    grid-row: 2 / 4;
    flex-direction: column;
    padding: 0 2px 0 1px;
    line-height: 11px;
    border-right: 1px solid #a0a0a0;
}
.ruler-y .before {
    height: 131px;
    flex: none;
    border-top: 1px solid #300;
    border-bottom: 1px solid #000;
}
.ruler-y .before,
.ruler-y .scale div {
    display: flex;
    align-items: flex-end;
}
.ruler-y span {
    writing-mode: vertical-rl;
    transform: rotate(180deg);
}
.ruler-y .scale {
    position: relative;
    height: 383px;
    flex: none;
    background: repeating-linear-gradient(transparent 0 7px, #000 7px 8px) 100% 0 / 6px 100% no-repeat #fff;
}
.ruler-y .scale div {
    height: 80px;
    border-bottom: 1px solid #000;
}
.ruler-y .mark {
    position: absolute;
    top: 54px;
    left: 0;
    right: 0;
    height: 1px;
    background: #000;
}
.canvas {
    background: #c0c0c0;
    padding: 130px 0 0 48px;
    overflow: hidden;
}
.page {
    position: relative;
    width: 640px;
    height: 384px;
    display: flex;
    align-items: center;
    justify-content: center;
    background: conic-gradient(from 270deg at 1px 1px, #fff 90deg, transparent 0) 0 0 / 16px 16px #e6e6fa;
    box-shadow: 6px 6px 0 -4px #444, 7px 7px 0 -3px #808080, 8px 8px 0 -2px #a0a0a0;
}
.pointer {
    position: absolute;
    left: 163px;
    top: 55px;
}
.canvas-thumb {
    width: 15px;
    height: 517px;
    margin-top: 87px;
}
.hscroll .thumb {
    width: 392px;
    height: 15px;
    margin-left: 153px;
}

/* shape library */
.shapes {
    height: 100%;
    display: flex;
    flex-direction: column;
    padding: 5px 6px 7px 5px;
    background: #f0f0f0;
    overflow: hidden;
}
.btn {
    height: 21px;
    padding: 0 4px;
    background: #e1e1e1;
    border: 1px solid #adadad;
    white-space: nowrap;
}
.project {
    position: relative;
    height: 19px;
    margin-left: 1px;
}
.project .caret {
    position: absolute;
    right: 2px;
    bottom: 3px;
    border-top-color: #000;
}
.search {
    height: 20px;
    margin: 9px 0 6px;
    border: 1px solid #ccc;
    outline: 1px solid #fff;
    outline-offset: -2px;
    background: #f0f0f0;
}
.preview {
    flex: 1;
    border: 1px solid #a0a0a0;
    border-color: #a0a0a0 #fff #fff #a0a0a0;
}
.slider {
    appearance: none;
    height: 13px;
    margin: 6px 7px 15px 6px;
    background:
        linear-gradient(#e7e7e7, #e7e7e7) 0 50% / 100% 2px no-repeat,
        linear-gradient(#d6d6d6, #d6d6d6) 0 50% / 100% 4px no-repeat;
}
.slider::-webkit-slider-thumb {
    appearance: none;
    width: 6px;
    height: 13px;
    background: #0063b1;
}
.check {
    display: flex;
    align-items: center;
    height: 20px;
    gap: 3px;
    margin-bottom: 8px;
    white-space: nowrap;
}
.check input {
    appearance: none;
    flex: none;
    width: 13px;
    height: 13px;
    margin: 0;
    border: 1px solid #333;
    background: #fff;
}
.apply {
    display: flex;
    align-items: center;
    gap: 9px;
    margin-top: 60px;
    margin-left: 1px;
}
.apply .check {
    margin: 0;
}
.shapes hr {
    width: 100%;
    margin: 9px 0;
    border: 0;
    border-top: 1px solid #a0a0a0;
}
.shapes > .btn {
    margin-left: 1px;
}

/* status bar */
.status {
    height: 32px;
    display: flex;
    align-items: center;
    overflow: hidden;
    white-space: nowrap;
    font-family: "Open Sans", sans-serif;
}
.device {
    width: 171px;
    padding-left: 1px;
}
.cell {
    flex: none;
    height: 27px;
    display: flex;
    align-items: center;
    padding-left: 7px;
    border-left: 2px solid #a0a0a0;
}
.w215 { width: 215px; }
.w110 { width: 110px; }
.w85 { width: 85px; }
.w31 { width: 31px; padding-left: 8px; }
.w38 { width: 38px; }
.w42 { width: 42px; }
.key {
    color: #a0a0a0;
}
.zoom {
    flex: 1;
    gap: 4px;
}
.minus {
    width: 7px;
    border-top: 1px solid #a0a0a0;
}
.zoom-track {
    flex: 1;
    height: 14px;
    background:
        repeating-linear-gradient(90deg, transparent 0 5px, #222 5px 6px, transparent 6px 8px) 0 0 / 100% 4px no-repeat,
        linear-gradient(#d6d6d6, #d6d6d6) 0 100% / 100% 4px no-repeat;
}
```
